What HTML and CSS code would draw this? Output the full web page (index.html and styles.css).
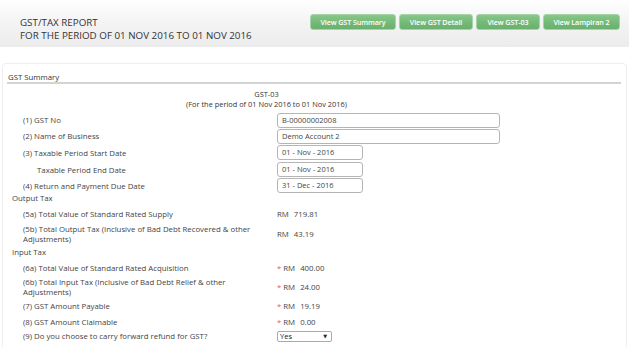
FILE: index.html
```html
<!DOCTYPE html>
<html>
<head>
<meta charset="utf-8">
<link rel="stylesheet" href="styles.css">
</head>
<body>
<div class="header">
  <div class="title">
    <div>GST/TAX REPORT</div>
    <div>FOR THE PERIOD OF 01 NOV 2016 TO 01 NOV 2016</div>
  </div>
  <div class="buttons">
    <button class="btn b1">View GST Summary</button>
    <button class="btn b2">View GST Detail</button>
    <button class="btn b3">View GST-03</button>
    <button class="btn b4">View Lampiran 2</button>
  </div>
</div>
<div class="panel">
  <div class="panel-title">GST Summary</div>
  <div class="heading">
    <div>GST-03</div>
    <div>(For the period of 01 Nov 2016 to 01 Nov 2016)</div>
  </div>
  <div class="row r16"><div class="lbl">(1) GST No</div><div class="val"><div class="inp wide">B-00000002008</div></div></div>
  <div class="row r16"><div class="lbl">(2) Name of Business</div><div class="val"><div class="inp wide">Demo Account 2</div></div></div>
  <div class="row r17"><div class="lbl">(3) Taxable Period Start Date</div><div class="val"><div class="inp date">01 - Nov - 2016</div></div></div>
  <div class="row r17"><div class="lbl sub">Taxable Period End Date</div><div class="val"><div class="inp date">01 - Nov - 2016</div></div></div>
  <div class="row r15"><div class="lbl">(4) Return and Payment Due Date</div><div class="val"><div class="inp date">31 - Dec - 2016</div></div></div>
  <div class="section s-out">Output Tax</div>
  <div class="row r16"><div class="lbl">(5a) Total Value of Standard Rated Supply</div><div class="val">RM<span class="num">719.81</span></div></div>
  <div class="row r24"><div class="lbl">(5b) Total Output Tax (Inclusive of Bad Debt Recovered &amp; other Adjustments)</div><div class="val">RM<span class="num">43.19</span></div></div>
  <div class="section s-in">Input Tax</div>
  <div class="row r16"><div class="lbl">(6a) Total Value of Standard Rated Acquisition</div><div class="val"><span class="req">*</span>RM<span class="num">400.00</span></div></div>
  <div class="row r22"><div class="lbl">(6b) Total Input Tax (Inclusive of Bad Debt Relief &amp; other Adjustments)</div><div class="val"><span class="req">*</span>RM<span class="num">24.00</span></div></div>
  <div class="row r16"><div class="lbl">(7) GST Amount Payable</div><div class="val"><span class="req">*</span>RM<span class="num">19.19</span></div></div>
  <div class="row r15"><div class="lbl">(8) GST Amount Claimable</div><div class="val"><span class="req">*</span>RM<span class="num">0.00</span></div></div>
  <div class="row r14"><div class="lbl">(9) Do you choose to carry forward refund for GST?</div><div class="val"><div class="sel">Yes<span class="arrow">▼</span></div></div></div>
</div>
</body>
</html>
```
FILE: styles.css
```css
* { box-sizing: border-box; }
html, body { margin: 0; padding: 0; background: #fff; }
body {
  font-family: "Open Sans", "DejaVu Sans", sans-serif;
  color: #444;
  font-size: 7.8px;
  width: 629px;
  height: 347px;
  overflow: hidden;
}
.header {
  height: 47px;
  background: linear-gradient(to bottom, #ffffff 0%, #f3f3f3 50%, #ececec 100%);
  display: flex;
  justify-content: space-between;
  padding: 14px 9px 0 20px;
}
.title {
  font-size: 9.8px;
  line-height: 12.5px;
  color: #333;
  padding-top: 3px;
}
.buttons { display: flex; gap: 3px; align-items: flex-start; }
.btn {
  height: 16px;
  border: 1px solid #a6d3a7;
  border-radius: 3px;
  background: linear-gradient(to bottom, #88c78a 0%, #74b977 55%, #69b16c 100%);
  color: #fff;
  font-family: "Open Sans", sans-serif;
  font-size: 7.2px;
  font-weight: 600;
  padding: 0;
  letter-spacing: -0.1px;
  text-align: center;
}
.b1 { width: 86px; }
.b2 { width: 74px; }
.b3 { width: 64px; }
.b4 { width: 77px; }
.panel {
  margin: 16px 2px 0 2px;
  border: 1px solid #eee;
  border-radius: 4px;
  padding: 5px 4px 0 4px;
  height: 300px;
}
.panel-title {
  font-size: 7.8px;
  color: #333;
  line-height: 10px;
  padding: 3px 0 0 1px;
  border-bottom: 2px solid #d4d4d4;
  margin-right: 1px;
}
.heading {
  text-align: center;
  color: #333;
  font-size: 7.4px;
  line-height: 9.5px;
  margin-top: 6px;
  margin-bottom: 3px;
  padding-right: 96px;
}
.row {
  display: flex;
  align-items: center;
}
.r14 { height: 14px; }
.r15 { height: 15px; }
.r16 { height: 16px; }
.r17 { height: 17px; }
.r22 { height: 22px; }
.r24 { height: 24px; }
.lbl {
  width: 270px;
  padding-left: 16px;
  padding-right: 6px;
  line-height: 10px;
}
.lbl.sub { padding-left: 30px; }
.val { display: flex; align-items: center; }
.section {
  padding-left: 5px;
  height: 15px;
  line-height: 15px;
}
.s-out { margin-top: -3px; height: 16px; line-height: 16px; }
.s-in { margin-top: -1px; }
.inp {
  height: 15px;
  border: 1px solid #b5b5b5;
  border-radius: 3px;
  padding-left: 4px;
  line-height: 13px;
  font-size: 7.5px;
  color: #444;
}
.wide { width: 223px; }
.date { width: 86px; }
.num { margin-left: 5px; }
.req { color: #e55; margin-right: 2px; }
.sel {
  width: 55px;
  height: 11px;
  border: 1px solid #aaa;
  border-radius: 2px;
  font-size: 7.5px;
  line-height: 9px;
  padding-left: 2px;
  position: relative;
  color: #222;
}
.arrow {
  position: absolute;
  right: 4px;
  top: 0;
  font-size: 5px;
}
```
